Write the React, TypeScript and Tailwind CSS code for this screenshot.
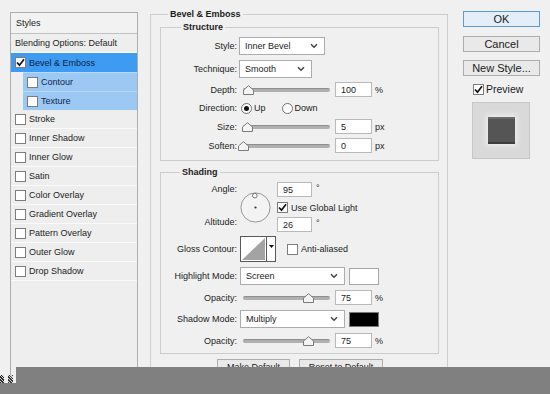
import React from "react";

function Check({ checked }: { checked?: boolean }) {
  return (
    <span className="flex items-center justify-center w-[11px] h-[11px] shrink-0 border border-[#7c7c7c] bg-white">
      {checked && (
        <svg width="9" height="9" viewBox="0 0 9 9">
          <path d="M1 4.5 L3.5 7.2 L8 1.2" fill="none" stroke="#111" strokeWidth="1.7" />
        </svg>
      )}
    </span>
  );
}

function Radio({ on }: { on?: boolean }) {
  return (
    <span className="flex items-center justify-center w-[11px] h-[11px] shrink-0 rounded-full border border-[#6f6f6f] bg-white">
      {on && <span className="w-[5px] h-[5px] rounded-full bg-[#111]" />}
    </span>
  );
}

function Chevron() {
  return (
    <svg width="8" height="6" viewBox="0 0 8 6">
      <path d="M1 1.2 L4 4.2 L7 1.2" fill="none" stroke="#444" strokeWidth="1.5" />
    </svg>
  );
}

function Select({ text, w }: { text: string; w: string }) {
  return (
    <div className={`${w} h-full flex items-center justify-between border border-[#acacac] bg-white pl-[5px] pr-[6px]`}>
      <span>{text}</span>
      <Chevron />
    </div>
  );
}

function Slider({ c }: { c: number }) {
  return (
    <div className="relative w-[91px] h-[15px] shrink-0 flex items-center">
      <div className="mx-[2px] w-full h-[4px] rounded-full bg-[#b0b0b0] border-t border-[#8e8e8e]" />
      <svg
        className="absolute top-[3px]"
        style={{ left: c - 5.5 }}
        width="11"
        height="10"
        viewBox="0 0 11 10"
      >
        <path d="M0.5 9.5 L0.5 5 L5.5 0.7 L10.5 5 L10.5 9.5 Z" fill="#f4f4f4" stroke="#7a7a7a" />
      </svg>
    </div>
  );
}

function NumInput({ v }: { v: string }) {
  return (
    <div className="w-[37px] h-[15px] shrink-0 flex items-center border border-[#b9b9b9] bg-white pl-[5px]">
      {v}
    </div>
  );
}

function Label({ t }: { t: string }) {
  return <div className="w-[76px] shrink-0 text-right">{t}</div>;
}

function SliderRow({ label, c, v, unit, mt }: { label: string; c: number; v: string; unit: string; mt: string }) {
  return (
    <div className={`flex items-center h-[15px] ${mt}`}>
      <Label t={label} />
      <div className="ml-[4px]">
        <Slider c={c} />
      </div>
      <div className="ml-[3px]">
        <NumInput v={v} />
      </div>
      <span className="ml-[3px]">{unit}</span>
    </div>
  );
}

const effects = [
  "Stroke",
  "Inner Shadow",
  "Inner Glow",
  "Satin",
  "Color Overlay",
  "Gradient Overlay",
  "Pattern Overlay",
  "Outer Glow",
  "Drop Shadow",
];

function Btn({ text, def }: { text: string; def?: boolean }) {
  return (
    <div
      className={`w-[77px] h-[16px] flex items-center justify-center border ${
        def ? "border-[#5b9bd0] bg-[#e3eef8]" : "border-[#adadad] bg-[#e9e9e9]"
      }`}
    >
      {text}
    </div>
  );
}

export default function App() {
  return (
    <div className="relative w-[550px] h-[394px] overflow-hidden bg-[#f0f0f0] text-[#1c1c1c] text-[9px] leading-[12px] font-['Liberation_Sans',Arial,sans-serif]">
      <div className="flex">
        {/* Left styles list */}
        <div className="ml-[10px] mt-[12px] w-[128px] h-[372px] shrink-0 border border-[#adadad] bg-[#eeeeee] flex flex-col">
          <div className="h-[21px] flex items-center pl-[5px] border-b border-[#c2c2c2] bg-[#f2f2f2]">Styles</div>
          <div className="h-[19px] flex items-center pl-[4px] border-b border-white/60">Blending Options: Default</div>
          <div className="h-[19px] flex items-center pl-[4px] bg-[#3d9bf1] text-[#0d1f4d]">
            <Check checked />
            <span className="ml-[3px]">Bevel &amp; Emboss</span>
          </div>
          {["Contour", "Texture"].map((t) => (
            <div key={t} className="h-[19px] ml-[12px] flex items-center pl-[4px] bg-[#9cc9f3] border-t border-[#b9daf6] text-[#0d1f4d]">
              <Check />
              <span className="ml-[3px]">{t}</span>
            </div>
          ))}
          {effects.map((t) => (
            <div key={t} className="h-[19px] flex items-center pl-[4px] border-b border-white/70">
              <Check />
              <span className="ml-[3px]">{t}</span>
            </div>
          ))}
        </div>

        {/* Middle */}
        <fieldset className="ml-[12px] mt-[8px] w-[298px] h-[390px] shrink-0 border border-[#cdcdcd]">
          <legend className="ml-[17px] px-[2px] font-bold leading-[12px]">Bevel &amp; Emboss</legend>

          <fieldset className="mt-[1px] ml-[9px] mr-[8px] border border-[#cdcdcd] pb-[7px]">
            <legend className="ml-[20px] px-[2px] font-bold leading-[12px]">Structure</legend>
            <div className="flex items-center h-[18px] mt-[4px]">
              <Label t="Style:" />
              <div className="ml-[2px] h-full">
                <Select text="Inner Bevel" w="w-[86px]" />
              </div>
            </div>
            <div className="flex items-center h-[18px] mt-[5px]">
              <Label t="Technique:" />
              <div className="ml-[2px] h-full">
                <Select text="Smooth" w="w-[73px]" />
              </div>
            </div>
            <SliderRow label="Depth:" c={7.5} v="100" unit="%" mt="mt-[4px]" />
            <div className="flex items-center h-[16px] mt-[3px]">
              <Label t="Direction:" />
              <div className="ml-[4px]">
                <Radio on />
              </div>
              <span className="ml-[2px]">Up</span>
              <div className="ml-[16px]">
                <Radio />
              </div>
              <span className="ml-[2px]">Down</span>
            </div>
            <SliderRow label="Size:" c={6.5} v="5" unit="px" mt="mt-[3px]" />
            <SliderRow label="Soften:" c={2} v="0" unit="px" mt="mt-[4px]" />
          </fieldset>

          <fieldset className="mt-[5px] ml-[9px] mr-[8px] border border-[#cdcdcd] pb-[5px]">
            <legend className="ml-[19px] px-[2px] font-bold leading-[12px]">Shading</legend>
            <div className="flex mt-[4px] h-[50px]">
              <div className="w-[76px] shrink-0 flex flex-col text-right">
                <div className="h-[15px] leading-[15px]">Angle:</div>
                <div className="h-[15px] leading-[15px] mt-[18px]">Altitude:</div>
              </div>
              <svg className="ml-[3px] mt-[10px] shrink-0" width="31" height="31" viewBox="0 0 31 31">
                <circle cx="15.5" cy="15.5" r="14.6" fill="#f3f3f3" stroke="#8c8c8c" strokeWidth="0.9" />
                <circle cx="14.8" cy="3.6" r="2.3" fill="#fff" stroke="#555" strokeWidth="0.8" />
                <circle cx="15.5" cy="15.5" r="1.1" fill="#333" />
              </svg>
              <div className="ml-[6px] flex flex-col">
                <div className="flex items-start h-[15px]">
                  <div className="w-[35px] h-[15px] flex items-center border border-[#b9b9b9] bg-white pl-[5px]">95</div>
                  <span className="ml-[4px] mt-[1px] leading-[10px]">°</span>
                </div>
                <div className="flex items-center mt-[5px] h-[11px]">
                  <Check checked />
                  <span className="ml-[3px]">Use Global Light</span>
                </div>
                <div className="flex items-start h-[15px] mt-[4px]">
                  <div className="w-[35px] h-[15px] flex items-center border border-[#b9b9b9] bg-white pl-[5px]">26</div>
                  <span className="ml-[4px] mt-[1px] leading-[10px]">°</span>
                </div>
              </div>
            </div>
            <div className="flex items-center h-[26px] mt-[4px]">
              <Label t="Gloss Contour:" />
              <div className="ml-[3px] w-[36px] h-[26px] flex border border-[#5a5a5a] bg-white">
                <svg className="w-[25px] h-full" viewBox="0 0 25 24" preserveAspectRatio="none">
                  <polygon points="1,23 24,1 24,23" fill="#a3a3a3" />
                </svg>
                <div className="flex-1 border-l border-[#5a5a5a] flex justify-center pt-[8px]">
                  <svg width="5" height="3" viewBox="0 0 5 3">
                    <polygon points="0,0 5,0 2.5,3" fill="#111" />
                  </svg>
                </div>
              </div>
              <div className="ml-[11px]">
                <Check />
              </div>
              <span className="ml-[3px]">Anti-aliased</span>
            </div>
            <div className="flex items-center h-[18px] mt-[5px]">
              <Label t="Highlight Mode:" />
              <div className="ml-[3px] h-full">
                <Select text="Screen" w="w-[105px]" />
              </div>
              <div className="ml-[4px] w-[30px] h-[17px] border border-[#a6a6a6] bg-white" />
            </div>
            <SliderRow label="Opacity:" c={67} v="75" unit="%" mt="mt-[5px]" />
            <div className="flex items-center h-[18px] mt-[5px]">
              <Label t="Shadow Mode:" />
              <div className="ml-[3px] h-full">
                <Select text="Multiply" w="w-[105px]" />
              </div>
              <div className="ml-[4px] w-[30px] h-[15px] border border-[#7a7a7a] bg-black" />
            </div>
            <SliderRow label="Opacity:" c={67} v="75" unit="%" mt="mt-[5px]" />
          </fieldset>

          <div className="flex mt-[5px] ml-[66px]">
            <div className="w-[73px] h-[16px] flex items-center justify-center border border-[#adadad] bg-[#e9e9e9]">Make Default</div>
            <div className="ml-[9px] w-[84px] h-[16px] flex items-center justify-center border border-[#adadad] bg-[#e9e9e9]">Reset to Default</div>
          </div>
        </fieldset>

        {/* Right */}
        <div className="ml-[14px] w-[78px] shrink-0 flex flex-col text-[11px] leading-[14px]">
          <div className="mt-[11px] ml-[1px]">
            <Btn text="OK" def />
          </div>
          <div className="mt-[9px] ml-[1px]">
            <Btn text="Cancel" />
          </div>
          <div className="mt-[8px] ml-[1px]">
            <Btn text="New Style..." />
          </div>
          <div className="mt-[7px] ml-[11px] flex items-center h-[12px] text-[10.5px]">
            <Check checked />
            <span className="ml-[2px]">Preview</span>
          </div>
          <div className="mt-[7px] ml-[10px] w-[58px] h-[57px] border border-[#c6c6c6] bg-[#d9d9d9] flex items-center justify-center">
            <div className="w-[27px] h-[27px] bg-[#555555] border-t-2 border-t-[#6a6a6a] border-b-2 border-b-[#3e3e3e] shadow-[0_0_5px_2px_rgba(240,240,240,0.9)]" />
          </div>
        </div>
      </div>

      {/* bottom overlay bar */}
      <div className="absolute left-[16px] top-[367px] right-0 bottom-0 bg-[#808080]" />
      <div className="absolute left-0 top-[383px] w-[16px] bottom-0 bg-[#808080]" />
      <div className="absolute left-0 top-[375px] w-[4px] h-[8px] bg-[repeating-linear-gradient(45deg,#222_0_1px,#ddd_1px_2px)]" />
      <div className="absolute left-[8px] top-[375px] w-[5px] h-[8px] bg-[repeating-linear-gradient(45deg,#333_0_1px,#ddd_1px_2px)]" />
    </div>
  );
}
